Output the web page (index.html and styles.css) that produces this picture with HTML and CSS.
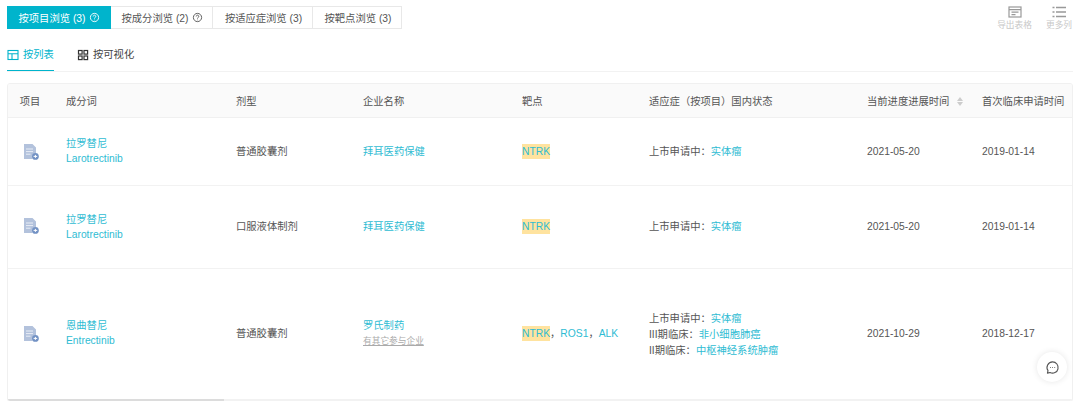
FILE: index.html
```html
<!DOCTYPE html>
<html lang="zh-CN">
<head>
  <meta charset="UTF-8">
  <title>按项目浏览</title>
  <link rel="stylesheet" href="styles.css">
</head>
<body>
<div class="top-bar">
  <div class="tabs">
    <div class="tab active w1">按项目浏览 (3)
      <svg class="help" viewBox="0 0 12 12"><circle cx="6" cy="6" r="4.5"/><path d="M4.6 4.9a1.4 1.4 0 1 1 2.2 1.1c-.5.3-.8.6-.8 1.1"/><path d="M6 8.4v.6"/></svg>
    </div>
    <div class="tab w2">按成分浏览 (2)
      <svg class="help" viewBox="0 0 12 12"><circle cx="6" cy="6" r="4.5"/><path d="M4.6 4.9a1.4 1.4 0 1 1 2.2 1.1c-.5.3-.8.6-.8 1.1"/><path d="M6 8.4v.6"/></svg>
    </div>
    <div class="tab w3">按适应症浏览 (3)</div>
    <div class="tab w4">按靶点浏览 (3)</div>
  </div>
  <div class="tools">
    <div class="tool tool-export">
      <svg viewBox="0 0 14 12"><rect x="1" y="1" width="12" height="10" fill="none" stroke="#999" stroke-width="1.2"/><path d="M1 3.6h12M3.5 6.2h7M3.5 8.6h4" stroke="#999" stroke-width="1.2"/></svg>
      <span>导出表格</span>
    </div>
    <div class="tool tool-more">
      <svg viewBox="0 0 14 12"><path d="M4 1.5h10M4 6h10M4 10.5h10" stroke="#999" stroke-width="1.4"/><path d="M0.5 1.5h2M0.5 6h2M0.5 10.5h2" stroke="#999" stroke-width="1.4"/></svg>
      <span>更多列</span>
    </div>
  </div>
</div>

<div class="subtabs">
  <div class="subtab on">
    <svg viewBox="0 0 12 12"><rect x="1" y="1.5" width="10" height="9" fill="none" stroke="#00b4cc" stroke-width="1.1"/><path d="M1 4.8h10M5 4.8v5.7" stroke="#00b4cc" stroke-width="1.1"/></svg>
    按列表
  </div>
  <div class="subtab">
    <svg viewBox="0 0 12 12"><g fill="none" stroke="#333" stroke-width="1.2"><rect x="1.5" y="1.5" width="3.6" height="3.6"/><rect x="7" y="1.5" width="3.6" height="3.6"/><rect x="1.5" y="7" width="3.6" height="3.6"/><rect x="7" y="7" width="3.6" height="3.6"/></g></svg>
    按可视化
  </div>
</div>

<div class="table-wrap">
  <table class="list">
    <colgroup>
      <col class="c1"><col class="c2"><col class="c3"><col class="c4"><col class="c5"><col class="c6"><col class="c7"><col class="c8">
    </colgroup>
    <thead>
      <tr>
        <th class="center">项目</th>
        <th>成分词</th>
        <th>剂型</th>
        <th>企业名称</th>
        <th>靶点</th>
        <th>适应症（按项目）国内状态</th>
        <th>当前进度进展时间<span class="sort"></span></th>
        <th>首次临床申请时间</th>
      </tr>
    </thead>
    <tbody>
      <tr class="r1">
        <td class="center"><svg class="doc" viewBox="0 0 16 16"><path d="M1 0h8.5L13 3.5V9a4 4 0 0 0-3.5 6H1z" fill="#b3c2dc"/><path d="M3 5h7M3 7.6h7M3 10.2h4.5" stroke="#e9eef6" stroke-width="1"/><circle cx="12.4" cy="12.4" r="3.4" fill="#7392c4"/><path d="M10.6 12.4h3.6M12.4 10.9v3" stroke="#fff" stroke-width="1"/></svg></td>
        <td class="name"><a class="link">拉罗替尼</a><br><a class="link">Larotrectinib</a></td>
        <td>普通胶囊剂</td>
        <td><a class="link">拜耳医药保健</a></td>
        <td><mark class="hit">NTRK</mark></td>
        <td>上市申请中：<a class="link">实体瘤</a></td>
        <td>2021-05-20</td>
        <td>2019-01-14</td>
      </tr>
      <tr class="r2">
        <td class="center"><svg class="doc" viewBox="0 0 16 16"><path d="M1 0h8.5L13 3.5V9a4 4 0 0 0-3.5 6H1z" fill="#b3c2dc"/><path d="M3 5h7M3 7.6h7M3 10.2h4.5" stroke="#e9eef6" stroke-width="1"/><circle cx="12.4" cy="12.4" r="3.4" fill="#7392c4"/><path d="M10.6 12.4h3.6M12.4 10.9v3" stroke="#fff" stroke-width="1"/></svg></td>
        <td class="name"><a class="link">拉罗替尼</a><br><a class="link">Larotrectinib</a></td>
        <td>口服液体制剂</td>
        <td><a class="link">拜耳医药保健</a></td>
        <td><mark class="hit">NTRK</mark></td>
        <td>上市申请中：<a class="link">实体瘤</a></td>
        <td>2021-05-20</td>
        <td>2019-01-14</td>
      </tr>
      <tr class="r3">
        <td class="center"><svg class="doc" viewBox="0 0 16 16"><path d="M1 0h8.5L13 3.5V9a4 4 0 0 0-3.5 6H1z" fill="#b3c2dc"/><path d="M3 5h7M3 7.6h7M3 10.2h4.5" stroke="#e9eef6" stroke-width="1"/><circle cx="12.4" cy="12.4" r="3.4" fill="#7392c4"/><path d="M10.6 12.4h3.6M12.4 10.9v3" stroke="#fff" stroke-width="1"/></svg></td>
        <td class="name"><a class="link">恩曲替尼</a><br><a class="link">Entrectinib</a></td>
        <td>普通胶囊剂</td>
        <td><a class="link">罗氏制药</a><br><span class="other">有其它参与企业</span></td>
        <td><mark class="hit">NTRK</mark>，<a class="link">ROS1</a>，<a class="link">ALK</a></td>
        <td class="status">上市申请中：<a class="link">实体瘤</a><br>III期临床：<a class="link">非小细胞肺癌</a><br>II期临床：<a class="link">中枢神经系统肿瘤</a></td>
        <td>2021-10-29</td>
        <td>2018-12-17</td>
      </tr>
    </tbody>
  </table>
  <div class="scroll-track"><div class="scroll-thumb"></div></div>
</div>

<div class="chat">
  <svg viewBox="0 0 16 16"><path d="M8 2a6 6 0 1 1-2.6 11.4L2.6 14l.6-2.6A6 6 0 0 1 8 2z" fill="none" stroke="#555" stroke-width="1.2" stroke-linejoin="round"/><path d="M5.4 8h.8M7.7 8h.8M10 8h.8" stroke="#555" stroke-width="1.1"/></svg>
</div>
</body>
</html>
```

FILE: styles.css
```css
html, body { margin: 0; padding: 0; height: 401px; overflow: hidden; }
body {
  position: relative;
  width: 1080px;
  background: #fff;
  color: #555;
  font-family: "Liberation Sans", "Noto Sans CJK SC", sans-serif;
  font-size: 10.3px;
}

/* onglets du haut */
.top-bar {
  display: flex;
  justify-content: space-between;
  padding: 6px 8px 0 7px;
  height: 37px;
}
.tabs { display: flex; height: 23px; }
.tab {
  display: flex;
  align-items: center;
  justify-content: center;
  gap: 4px;
  box-sizing: border-box;
  padding: 0 0 1px 2px;
  border: 1px solid #e8e8e8;
  border-left: none;
  color: #555;
  white-space: nowrap;
}
.tab.active { background: #00b4cc; border-color: #00b4cc; color: #fff; }
.w1 { width: 104px; }
.w2 { width: 102px; }
.w3 { width: 100px; }
.w4 { width: 89px; }
.help {
  width: 11px;
  height: 11px;
  fill: none;
  stroke: currentColor;
  stroke-width: 1;
}

.tools { display: flex; gap: 14px; }
.tool {
  display: flex;
  flex-direction: column;
  align-items: center;
  color: #c8c8c8;
  font-size: 8.7px;
  line-height: 12px;
  white-space: nowrap;
}
.tool-export { width: 35px; }
.tool-more { width: 26px; }
.tool svg { width: 14px; height: 12px; margin-bottom: 1px; }

/* sous-onglets */
.subtabs {
  display: flex;
  gap: 23px;
  height: 28px;
  border-bottom: 1px solid #f2f2f2;
  margin: 0 7px;
}
.subtab {
  display: flex;
  align-items: flex-start;
  gap: 4px;
  line-height: 24px;
  color: #444;
  height: 28px;
  box-sizing: border-box;
  white-space: nowrap;
}
.subtab svg { width: 12px; height: 12px; margin-top: 6px; }
.subtab.on { color: #00b4cc; border-bottom: 1px solid #00b4cc; width: 47px; }

/* tableau */
.table-wrap {
  margin: 11px 7px 0 7px;
  width: 1066px;
  box-sizing: border-box;
  border: 1px solid #f0f0f0;
  border-radius: 3px;
  height: 319px;
  overflow: hidden;
  display: flex;
  flex-direction: column;
}
.list {
  width: 1064px;
  table-layout: fixed;
  border-collapse: collapse;
  flex: none;
}
.c1 { width: 44px; }
.c2 { width: 170px; }
.c3 { width: 127px; }
.c4 { width: 159px; }
.c5 { width: 127px; }
.c6 { width: 218px; }
.c7 { width: 115px; }
.c8 { width: 104px; }
.list th {
  height: 33px;
  padding: 0 0 0 14px;
  background: #fafafa;
  border-bottom: 1px solid #f0f0f0;
  font-weight: normal;
  text-align: left;
  color: #555;
  white-space: nowrap;
}
.list td {
  box-sizing: border-box;
  padding: 0 0 0 14px;
  border-bottom: 1px solid #f2f2f2;
  line-height: 15px;
  color: #555;
  white-space: nowrap;
}
.list .center { padding: 0; text-align: center; }
.list .status { line-height: 16px; padding-top: 2px; }
.r1 td { height: 68px; }
.r2 td { height: 83px; }
.r3 td { height: 130px; border-bottom: none; }
.list .r1 .name, .list .r3 .name { padding-bottom: 2px; }
.list .r2 td { padding-bottom: 2px; }
.list .r2 .name { padding-bottom: 0; }
.link { color: #2fbcd3; }
.hit { background: #ffe39f; color: #2fbcd3; padding: 2px 0; }
.other {
  color: #aaa;
  font-size: 8.7px;
  text-decoration: underline;
}
.doc { width: 16px; height: 16px; display: block; margin: 0 auto 0 15px; }
.sort {
  display: inline-block;
  position: relative;
  width: 6px;
  height: 9px;
  margin-left: 8px;
  vertical-align: -1px;
}
.sort::before, .sort::after {
  content: "";
  position: absolute;
  left: 0;
  border-left: 3px solid transparent;
  border-right: 3px solid transparent;
}
.sort::before { top: 0; border-bottom: 4px solid #ccc; }
.sort::after { bottom: 0; border-top: 4px solid #ccc; }

.scroll-track {
  height: 2px;
  background: #f2f2f2;
  flex: none;
}
.scroll-thumb {
  width: 216px;
  height: 2px;
  background: #dcdcdc;
}

/* bouton flottant */
.chat {
  position: absolute;
  left: 1037px;
  top: 352px;
  width: 30px;
  height: 30px;
  border-radius: 50%;
  background: #fff;
  box-shadow: 0 0 6px rgba(0, 0, 0, 0.1);
  display: flex;
  align-items: center;
  justify-content: center;
}
.chat svg { width: 15px; height: 15px; }
```
